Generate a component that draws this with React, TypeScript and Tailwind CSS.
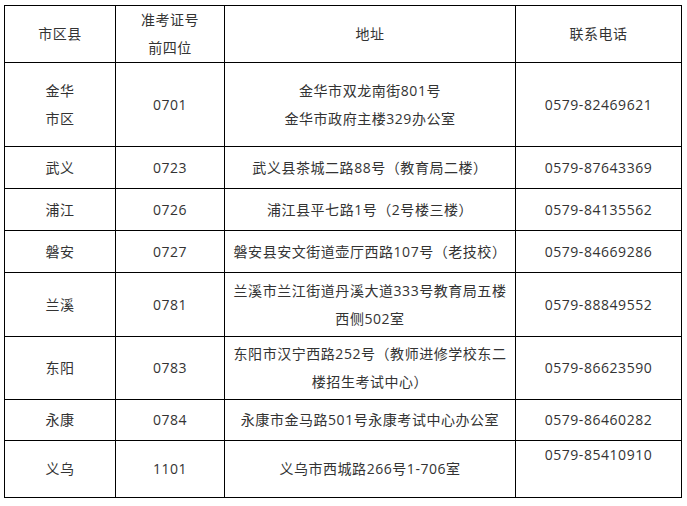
import React from "react";

interface Row {
  area: React.ReactNode;
  code: string;
  address: React.ReactNode;
  phone: string;
  height: string;
  phoneTop?: boolean;
}

const rows: Row[] = [
  {
    area: (
      <>
        金华
        <br />
        市区
      </>
    ),
    code: "0701",
    address: (
      <>
        金华市双龙南街801号
        <br />
        金华市政府主楼329办公室
      </>
    ),
    phone: "0579-82469621",
    height: "h-[84px]",
  },
  { area: "武义", code: "0723", address: "武义县茶城二路88号（教育局二楼）", phone: "0579-87643369", height: "h-[42px]" },
  { area: "浦江", code: "0726", address: "浦江县平七路1号（2号楼三楼）", phone: "0579-84135562", height: "h-[42px]" },
  { area: "磐安", code: "0727", address: "磐安县安文街道壶厅西路107号（老技校）", phone: "0579-84669286", height: "h-[42px]" },
  {
    area: "兰溪",
    code: "0781",
    address: (
      <>
        兰溪市兰江街道丹溪大道333号教育局五楼
        <br />
        西侧502室
      </>
    ),
    phone: "0579-88849552",
    height: "h-[64px]",
  },
  {
    area: "东阳",
    code: "0783",
    address: (
      <>
        东阳市汉宁西路252号（教师进修学校东二
        <br />
        楼招生考试中心）
      </>
    ),
    phone: "0579-86623590",
    height: "h-[63px]",
  },
  { area: "永康", code: "0784", address: "永康市金马路501号永康考试中心办公室", phone: "0579-86460282", height: "h-[41px]" },
  { area: "义乌", code: "1101", address: "义乌市西城路266号1-706室", phone: "0579-85410910", height: "h-[57px]", phoneTop: true },
];

const cell = "border border-black text-center align-middle p-0";

export default function App() {
  return (
    <div
      className="min-h-screen w-full bg-white pl-[4px] pt-[5px] text-[14px] leading-[28px] tracking-[0.544px] text-[#333333]"
      style={{ fontFamily: '"Open Sans", "Noto Sans CJK SC", sans-serif' }}
    >
      <table className="table-fixed border-collapse w-[677px]">
        <colgroup>
          <col className="w-[111px]" />
          <col className="w-[109px]" />
          <col className="w-[291px]" />
          <col className="w-[166px]" />
        </colgroup>
        <thead>
          <tr className="h-[57px]">
            <th className={`${cell} font-normal`}>市区县</th>
            <th className={`${cell} font-normal`}>
              准考证号
              <br />
              前四位
            </th>
            <th className={`${cell} font-normal`}>地址</th>
            <th className={`${cell} font-normal`}>联系电话</th>
          </tr>
        </thead>
        <tbody>
          {rows.map((r) => (
            <tr key={r.code} className={r.height}>
              <td className={cell}>{r.area}</td>
              <td className={cell}>{r.code}</td>
              <td className={cell}>{r.address}</td>
              <td className={r.phoneTop ? "border border-black text-center align-top p-0" : cell}>{r.phone}</td>
            </tr>
          ))}
        </tbody>
      </table>
    </div>
  );
}
